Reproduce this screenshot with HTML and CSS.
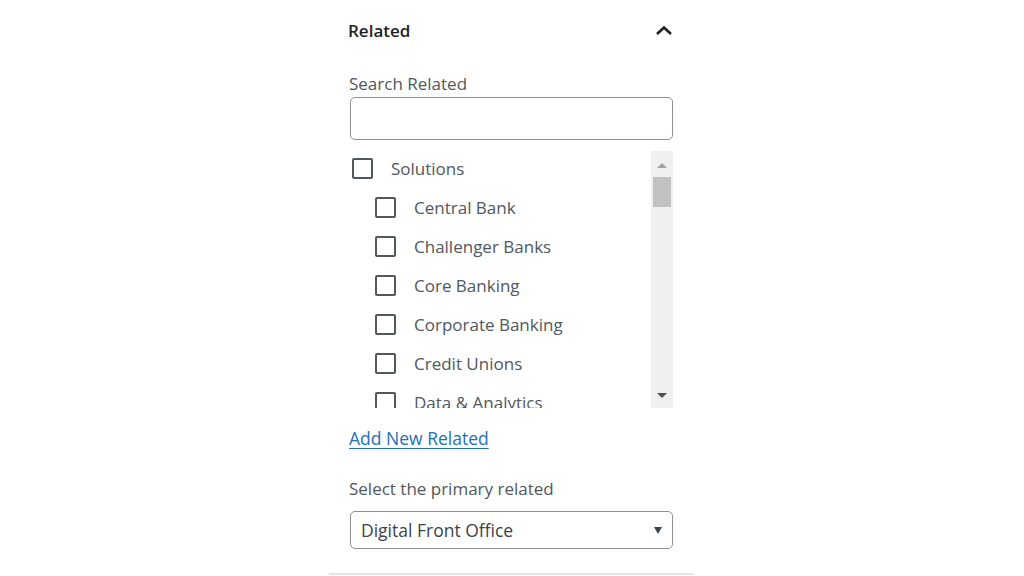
FILE: index.html
```html
<!DOCTYPE html>
<html lang="en">
<head>
<meta charset="utf-8">
<title>Related</title>
<link rel="stylesheet" href="styles.css">
</head>
<body>
<div class="panel">
  <div class="panel-header">
    <span class="panel-title">Related</span>
    <svg class="chevron" width="20" height="12" viewBox="0 0 20 12"><polyline points="3,10 10,3.5 17,10" fill="none" stroke="#1e1e1e" stroke-width="2.6"/></svg>
  </div>
  <div class="panel-body">
    <label class="field-label">Search Related</label>
    <input class="search-input" type="text">
    <div class="checklist">
      <ul class="items">
        <li class="item"><span class="box"></span><span>Solutions</span></li>
        <li class="item child"><span class="box"></span><span>Central Bank</span></li>
        <li class="item child"><span class="box"></span><span>Challenger Banks</span></li>
        <li class="item child"><span class="box"></span><span>Core Banking</span></li>
        <li class="item child"><span class="box"></span><span>Corporate Banking</span></li>
        <li class="item child"><span class="box"></span><span>Credit Unions</span></li>
        <li class="item child"><span class="box"></span><span>Data &amp; Analytics</span></li>
      </ul>
      <div class="scrollbar">
        <span class="arrow up"></span>
        <span class="thumb"></span>
        <span class="track"></span>
        <span class="arrow down"></span>
      </div>
    </div>
    <a class="add-link" href="#">Add New Related</a>
    <label class="field-label primary-label">Select the primary related</label>
    <div class="select">
      <span>Digital Front Office</span>
      <span class="select-arrow"></span>
    </div>
  </div>
</div>
</body>
</html>
```
FILE: styles.css
```css
* { box-sizing: border-box; }
html, body { margin: 0; padding: 0; background: #fff; }
body {
  font-family: "Open Sans", "Noto Sans", sans-serif;
  font-size: 17px;
  color: #50575e;
}
.panel {
  width: 365px;
  margin-left: 329px;
  border-bottom: 2px solid #e4e4e4;
  padding-bottom: 24px;
}
.panel-header {
  height: 60px;
  display: flex;
  align-items: center;
  justify-content: space-between;
  padding: 0 20px 0 19px;
}
.panel-title {
  font-weight: 600;
  font-size: 17px;
  color: #1e1e1e;
}
.chevron { display: block; }
.panel-body {
  padding: 13px 21px 0 21px;
  display: flex;
  flex-direction: column;
  align-items: flex-start;
}
.field-label {
  display: block;
  line-height: 22px;
  height: 22px;
  color: #50575e;
  margin-left: -1px;
}
.search-input {
  margin-top: 2px;
  width: 323px;
  height: 43px;
  border: 1.5px solid #8c8f94;
  border-radius: 5px;
  background: #fff;
}
.checklist {
  margin-top: 9px;
  width: 323px;
  height: 259px;
  display: flex;
  overflow: hidden;
}
.items {
  list-style: none;
  margin: 0;
  padding: 0 0 0 2px;
  flex: 1;
}
.item {
  height: 39px;
  display: flex;
  align-items: center;
  gap: 18px;
  color: #50575e;
  white-space: nowrap;
}
.item.child { padding-left: 23px; }
.box {
  width: 21px;
  height: 21px;
  border: 2px solid #50575e;
  border-radius: 2px;
  flex: none;
}
.scrollbar {
  width: 22px;
  margin-top: 2px;
  height: 257px;
  background: #f0f0f0;
  display: flex;
  flex-direction: column;
  align-items: center;
}
.arrow {
  width: 0;
  height: 0;
  border-left: 5px solid transparent;
  border-right: 5px solid transparent;
}
.arrow.up {
  margin-top: 12px;
  border-bottom: 5px solid #a3a3a3;
}
.thumb {
  margin-top: 9px;
  width: 18px;
  height: 30px;
  background: #c1c1c1;
}
.track { flex: 1; }
.arrow.down {
  margin-bottom: 10px;
  border-top: 5px solid #505050;
}
.add-link {
  margin-top: 19px;
  line-height: 22px;
  font-size: 17.5px;
  color: #2271b1;
  text-decoration: underline;
  text-underline-offset: 3px;
  margin-left: -1px;
}
.primary-label { margin-top: 29px; }
.select {
  margin-top: 11px;
  width: 323px;
  height: 38px;
  border: 1.5px solid #8c8f94;
  border-radius: 5px;
  display: flex;
  align-items: center;
  justify-content: space-between;
  padding: 0 10px 0 10px;
  font-size: 17.5px;
  color: #3c434a;
}
.select-arrow {
  width: 0;
  height: 0;
  border-left: 4px solid transparent;
  border-right: 4px solid transparent;
  border-top: 7px solid #3c434a;
}
```
